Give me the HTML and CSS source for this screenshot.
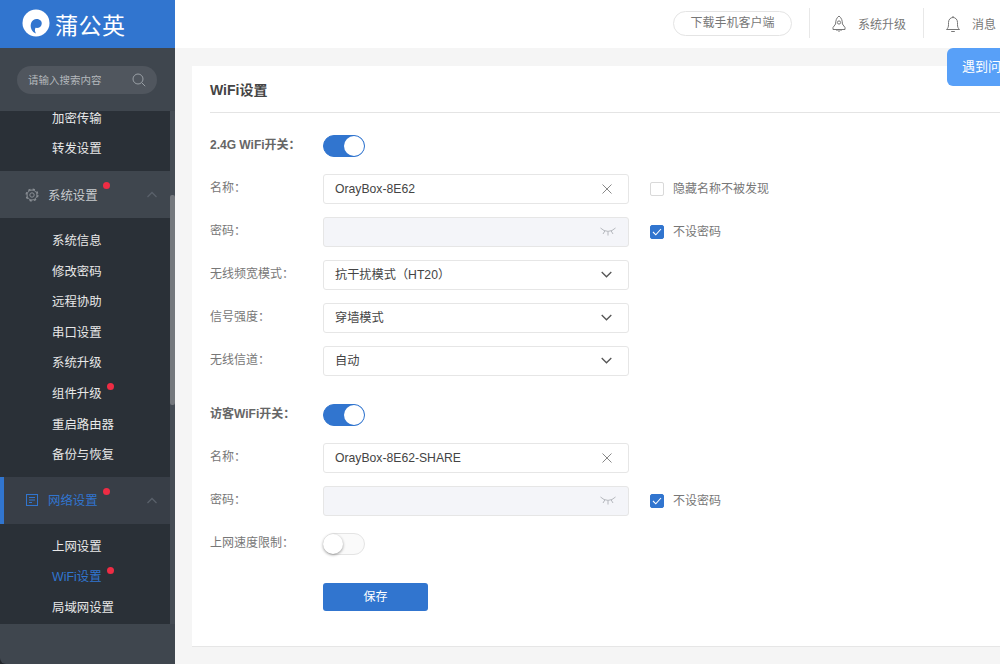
FILE: index.html
```html
<!DOCTYPE html>
<html lang="en">
<head>
    <meta charset="UTF-8">
    <meta name="viewport" content="width=device-width, initial-scale=1.0">
    <title>WiFi设置</title>
    <link rel="stylesheet" href="styles.css">
</head>
<body>
    <div class="sidebar">
        <div class="logo">
            <svg class="logo-mark" width="28" height="28" viewBox="0 0 28 28">
                <circle cx="14" cy="14" r="13.5" fill="#fff"/>
                <path d="M9.500 20.500c-2.200-5.200.4-10.300 5-10.500 3.500-.1 5.600 2.300 5.200 5-.4 2.900-3.100 4.400-6.200 3.800-.8 1.400-.9 3.500.5 5.700-2.200-.8-3.600-2-4.500-4z" fill="#3175cf"/>
            </svg>
            <span class="logo-text">蒲公英</span>
        </div>
        <div class="search-wrap">
            <div class="search">
                <span>请输入搜索内容</span>
                <svg width="14" height="14" viewBox="0 0 14 14" fill="none" stroke="#9aa0a6" stroke-width="1">
                    <circle cx="6" cy="6" r="5"/>
                    <path d="M9.700 9.700l3.500 3.500"/>
                </svg>
            </div>
        </div>
        <div class="menu-area">
            <div class="menu">
                <ul class="submenu first">
                    <li>加密传输</li>
                    <li>转发设置</li>
                </ul>
                <div class="menu-head">
                    <svg class="menu-icon" width="14" height="14" viewBox="0 0 14 14" fill="none" stroke="#8b9096">
                        <circle cx="7" cy="7" r="5" stroke-width="1"/>
                        <circle cx="7" cy="7" r="5.900" stroke-width="1.200" stroke-dasharray="2.300 2.330"/>
                        <circle cx="7" cy="7" r="2.200" stroke-width="1"/>
                    </svg>
                    <span class="dotted">系统设置</span>
                    <svg class="chevron" width="12" height="7" viewBox="0 0 12 7" fill="none" stroke="#59606a" stroke-width="1.300"><path d="M1.500 6L6 1.500 10.500 6"/></svg>
                </div>
                <ul class="submenu">
                    <li>系统信息</li>
                    <li>修改密码</li>
                    <li>远程协助</li>
                    <li>串口设置</li>
                    <li>系统升级</li>
                    <li><span class="dotted">组件升级</span></li>
                    <li>重启路由器</li>
                    <li>备份与恢复</li>
                </ul>
                <div class="menu-head active">
                    <svg class="menu-icon" width="14" height="14" viewBox="0 0 14 14" fill="none" stroke="#3175cf" stroke-width="1">
                        <rect x="1.500" y="1.500" width="11" height="11"/>
                        <path d="M4 4.500h6M4 7h6M4 9.500h3"/>
                    </svg>
                    <span class="dotted">网络设置</span>
                    <svg class="chevron" width="12" height="7" viewBox="0 0 12 7" fill="none" stroke="#59606a" stroke-width="1.300"><path d="M1.500 6L6 1.500 10.500 6"/></svg>
                </div>
                <ul class="submenu">
                    <li>上网设置</li>
                    <li class="current"><span class="dotted">WiFi设置</span></li>
                    <li>局域网设置</li>
                </ul>
            </div>
            <div class="scrollbar"><div class="thumb"></div></div>
        </div>
    </div>

    <div class="main">
        <div class="topbar">
            <div class="download">下载手机客户端</div>
            <div class="top-item">
                <svg width="16" height="18" viewBox="0 0 16 18" fill="none" stroke="#777" stroke-width="1">
                    <path d="M8 1C5.200 3 4.600 6 4.600 9L2 12.500V14.500h12V12.500L11.400 9C11.400 6 10.800 3 8 1z"/>
                    <circle cx="8" cy="7.500" r="1.600"/>
                    <path d="M8 14.500V17M6 14.500v1.500M10 14.500v1.500"/>
                </svg>
                <span>系统升级</span>
            </div>
            <div class="top-item">
                <svg width="16" height="18" viewBox="0 0 16 18" fill="none" stroke="#777" stroke-width="1">
                    <path d="M1.500 14.500c1.500-1.300 2-2.800 2-4.800V7.500C3.500 4.500 5.500 2.500 8 2.500s4.500 2 4.500 5v2.200c0 2 .5 3.500 2 4.800z"/>
                    <path d="M6.200 16.500h3.600M8 1v1.500"/>
                </svg>
                <span>消息</span>
            </div>
        </div>
        <div class="content">
            <div class="card">
                <h2>WiFi设置</h2>
                <div class="form">
                    <div class="row first-row">
                        <label class="strong">2.4G WiFi开关：</label>
                        <div class="switch on"></div>
                    </div>
                    <div class="row">
                        <label>名称：</label>
                        <div class="field"><span>OrayBox-8E62</span>
                            <svg width="10" height="10" viewBox="0 0 10 10" stroke="#888" stroke-width="1"><path d="M.5.500l9 9M9.500.500l-9 9"/></svg>
                        </div>
                        <div class="check"><span class="box"></span><span class="check-text">隐藏名称不被发现</span></div>
                    </div>
                    <div class="row">
                        <label>密码：</label>
                        <div class="field disabled">
                            <svg class="eye" width="16" height="9" viewBox="0 0 16 9" fill="none" stroke="#aeb1b7" stroke-width=".9"><path d="M.5 1l3.500 2.500M15.500 1L12 3.500M4 3.500q4 1.800 8 0M4.800 4L3 7M8 4.800V8.500M11.200 4L13 7"/></svg>
                        </div>
                        <div class="check"><span class="box checked"><svg width="10" height="8" viewBox="0 0 10 8" fill="none" stroke="#fff" stroke-width="1.100"><path d="M1 4l2.800 2.800L9 1"/></svg></span><span class="check-text">不设密码</span></div>
                    </div>
                    <div class="row">
                        <label>无线频宽模式：</label>
                        <div class="field"><span class="cjk-value">抗干扰模式（HT20）</span>
                            <svg width="11" height="7" viewBox="0 0 11 7" fill="none" stroke="#555" stroke-width="1.300"><path d="M.7 1l4.800 4.800L10.300 1"/></svg>
                        </div>
                    </div>
                    <div class="row">
                        <label>信号强度：</label>
                        <div class="field"><span class="cjk-value">穿墙模式</span>
                            <svg width="11" height="7" viewBox="0 0 11 7" fill="none" stroke="#555" stroke-width="1.300"><path d="M.7 1l4.800 4.800L10.300 1"/></svg>
                        </div>
                    </div>
                    <div class="row">
                        <label>无线信道：</label>
                        <div class="field"><span class="cjk-value">自动</span>
                            <svg width="11" height="7" viewBox="0 0 11 7" fill="none" stroke="#555" stroke-width="1.300"><path d="M.7 1l4.800 4.800L10.300 1"/></svg>
                        </div>
                    </div>
                    <div class="row guest-row">
                        <label class="strong">访客WiFi开关：</label>
                        <div class="switch on"></div>
                    </div>
                    <div class="row">
                        <label>名称：</label>
                        <div class="field"><span>OrayBox-8E62-SHARE</span>
                            <svg width="10" height="10" viewBox="0 0 10 10" stroke="#888" stroke-width="1"><path d="M.5.500l9 9M9.500.500l-9 9"/></svg>
                        </div>
                    </div>
                    <div class="row">
                        <label>密码：</label>
                        <div class="field disabled">
                            <svg class="eye" width="16" height="9" viewBox="0 0 16 9" fill="none" stroke="#aeb1b7" stroke-width=".9"><path d="M.5 1l3.500 2.500M15.500 1L12 3.500M4 3.500q4 1.800 8 0M4.800 4L3 7M8 4.800V8.500M11.200 4L13 7"/></svg>
                        </div>
                        <div class="check"><span class="box checked"><svg width="10" height="8" viewBox="0 0 10 8" fill="none" stroke="#fff" stroke-width="1.100"><path d="M1 4l2.800 2.800L9 1"/></svg></span><span class="check-text">不设密码</span></div>
                    </div>
                    <div class="row">
                        <label>上网速度限制：</label>
                        <div class="switch"></div>
                    </div>
                    <div class="row save-row">
                        <label></label>
                        <button class="save">保存</button>
                    </div>
                </div>
            </div>
        </div>
    </div>

    <div class="help">遇到问题</div>
</body>
</html>
```

FILE: styles.css
```css
* {
    box-sizing: border-box;
}

html, body {
    height: 100%;
}

body {
    margin: 0;
    display: flex;
    height: 664px;
    overflow: hidden;
    background-color: #23272c;
    font-family: "Liberation Sans", "Noto Sans CJK SC", sans-serif;
    font-size: 12px;
    color: #666;
}

/* sidebar */
.sidebar {
    width: 175px;
    flex-shrink: 0;
    display: flex;
    flex-direction: column;
    background-color: #3f464e;
    border-bottom-left-radius: 6px;
}

.logo {
    height: 48px;
    display: flex;
    align-items: center;
    padding-left: 22px;
    background-color: #3175cf;
}

.logo-mark {
    margin-right: 5px;
    margin-top: -2px;
}

.logo-text {
    font-size: 23px;
    color: #fff;
    letter-spacing: .5px;
}

.search-wrap {
    height: 63px;
    padding: 18px 18px 0 17px;
}

.search {
    height: 28px;
    display: flex;
    align-items: center;
    justify-content: space-between;
    padding: 0 11px;
    border-radius: 14px;
    background-color: #50565e;
    font-size: 10.500px;
    color: #b4b8bc;
}

.search span {
    padding-bottom: 2px;
}

.menu-area {
    height: 513px;
    display: flex;
    overflow: hidden;
}

.menu {
    width: 170px;
    font-size: 12.400px;
}

.submenu {
    list-style: none;
    margin: 0;
    padding: 7px 0;
    background-color: #2a3037;
}

.submenu.first {
    margin-top: -15.200px;
}

.submenu li {
    height: 30.600px;
    line-height: 32px;
    padding-left: 52px;
    color: #e8e8e8;
}

.submenu li.current {
    color: #3175cf;
}

.menu-head {
    height: 47px;
    display: flex;
    align-items: center;
    padding-left: 25px;
    color: #c9cccf;
}

.menu-head.active {
    padding-left: 21px;
    border-left: 4px solid #3175cf;
    background-color: #383e47;
    color: #3175cf;
}

.menu-icon {
    margin-right: 9px;
}

.chevron {
    margin-left: auto;
    margin-right: 12px;
}

.dotted {
    position: relative;
}

.dotted::after {
    content: "";
    position: absolute;
    top: -3.500px;
    right: -12.500px;
    width: 7px;
    height: 7px;
    border-radius: 50%;
    background-color: #ee2c44;
}

.scrollbar {
    width: 5px;
    background-color: #454c54;
}

.thumb {
    width: 5px;
    height: 210px;
    margin-top: 84px;
    background-color: #74787d;
    border-radius: 2px;
}

/* main */
.main {
    flex: 1;
    min-width: 0;
    background-color: #f5f5f5;
}

.topbar {
    height: 48px;
    display: flex;
    align-items: center;
    padding: 0 0 2px 498px;
    background-color: #fff;
    white-space: nowrap;
    color: #777;
}

.download {
    width: 119px;
    height: 25px;
    flex-shrink: 0;
    line-height: 23px;
    margin-right: 17px;
    text-align: center;
    border: 1px solid #e4e4e4;
    border-radius: 13px;
}

.top-item {
    height: 30px;
    flex-shrink: 0;
    display: flex;
    align-items: center;
    padding: 0 17px 0 21px;
    border-left: 1px solid #e8e8e8;
}

.top-item svg {
    margin-right: 11px;
    margin-top: 2px;
}

.content {
    padding: 18px 0 0 17px;
}

.card {
    width: 900px;
    height: 581px;
    padding: 0 18px;
    background-color: #fff;
    border-bottom: 1px solid #e6e6e6;
}

.card h2 {
    margin: 0;
    height: 47px;
    line-height: 49px;
    font-size: 14px;
    font-weight: bold;
    color: #444;
    border-bottom: 1px solid #e4e4e4;
}

.form {
    width: 640px;
}

.row {
    height: 43px;
    display: flex;
    align-items: center;
}

.first-row {
    height: 30px;
    margin-top: 18px;
    margin-bottom: 6px;
}

.guest-row {
    height: 30px;
    margin-top: 18px;
    margin-bottom: 6px;
}

.save-row {
    margin-top: 17px;
    height: 30px;
}

.row label {
    width: 113px;
    flex-shrink: 0;
    padding-bottom: 4px;
    color: #777;
}

.row label.strong {
    padding-bottom: 5px;
    font-weight: bold;
    color: #666;
}

.switch {
    width: 42px;
    height: 22px;
    position: relative;
    border: 1px solid #e4e4e4;
    border-radius: 11px;
    background-color: #fafafa;
}

.switch::after {
    content: "";
    position: absolute;
    top: 0;
    left: -1px;
    width: 20px;
    height: 20px;
    border-radius: 50%;
    background-color: #fff;
    box-shadow: 0 1px 3px rgba(0, 0, 0, 0.4);
}

.switch.on {
    border-color: #3175cf;
    background-color: #3175cf;
}

.switch.on::after {
    left: auto;
    right: 0;
    box-shadow: none;
}

.field {
    width: 306px;
    height: 30px;
    flex-shrink: 0;
    display: flex;
    align-items: center;
    justify-content: space-between;
    padding: 0 16px 0 11px;
    border: 1px solid #e6e6e6;
    border-radius: 3px;
    font-size: 12.200px;
    color: #444;
}

.cjk-value {
    padding-bottom: 2px;
}

.field.disabled {
    justify-content: flex-end;
    padding-right: 12px;
    background-color: #f4f5f9;
}

.check {
    display: flex;
    align-items: center;
    margin-left: 21px;
    color: #777;
    white-space: nowrap;
}

.check-text {
    padding-bottom: 2px;
}

.box {
    width: 14px;
    height: 14px;
    display: flex;
    align-items: center;
    justify-content: center;
    margin-right: 9px;
    border: 1px solid #d9d9d9;
    border-radius: 2px;
}

.box.checked {
    border-color: #3175cf;
    background-color: #3175cf;
}

.save {
    width: 105px;
    height: 28px;
    padding-bottom: 4px;
    border: none;
    border-radius: 3px;
    background-color: #3175cf;
    color: #fff;
    font-family: inherit;
    font-size: 12px;
}

.help {
    position: absolute;
    top: 48px;
    left: 947px;
    width: 90px;
    height: 38px;
    line-height: 38px;
    padding-left: 15px;
    border-radius: 6px;
    background-color: #58a0f8;
    color: #fff;
    font-size: 13px;
    white-space: nowrap;
}
```
